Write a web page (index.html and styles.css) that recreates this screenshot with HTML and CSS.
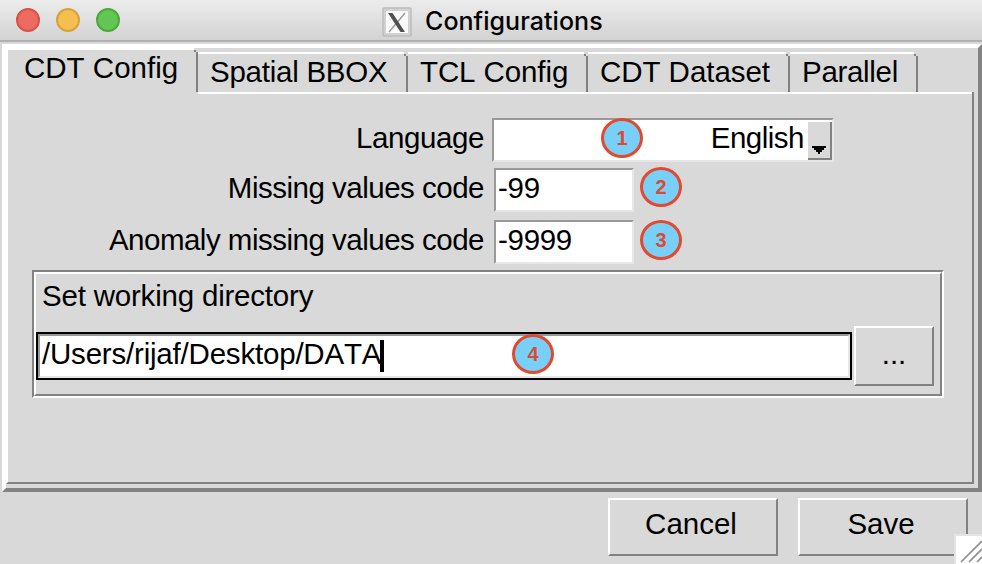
FILE: index.html
```html
<!DOCTYPE html>
<html lang="en">
<head>
<meta charset="utf-8">
<title>Configurations</title>
<link rel="stylesheet" href="styles.css">
</head>
<body>
<div class="window">
  <header class="titlebar">
    <div class="lights"><i class="light red"></i><i class="light yellow"></i><i class="light green"></i></div>
    <svg class="xicon" width="30" height="30" viewBox="0 0 30 30">
      <rect x="1" y="1" width="28" height="28" rx="1" fill="#d2d2d2" stroke="#bdbdbd" stroke-width="1.5"/>
      <rect x="4" y="4" width="22" height="22" fill="#fafafa"/>
      <path d="M23 6L7 25" stroke="#999" stroke-width="1.4"/>
      <path d="M6 6h4.5l12.500 19h-4.500z" fill="#505050"/>
    </svg>
    <h1 class="title">Configurations</h1>
  </header>
  <main class="notebook">
    <nav class="tabs">
      <div class="tab active"><span>CDT Config</span></div>
      <div class="tab bbox"><span>Spatial BBOX</span></div>
      <div class="tab tcl"><span>TCL Config</span></div>
      <div class="tab dataset"><span>CDT Dataset</span></div>
      <div class="tab parallel"><span>Parallel</span></div>
    </nav>
    <section class="page">
      <div class="row row-lang">
        <label>Language</label>
        <div class="field combo"><span class="value">English</span>
          <div class="drop"><svg width="14" height="8" viewBox="0 0 14 8" shape-rendering="crispEdges"><path d="M0 0h14v2h-2v2h-2v2h-2v2h-2v-2h-2v-2h-2v-2h-2z"/></svg></div>
          <b class="badge b1">1</b>
        </div>
      </div>
      <div class="row row-miss"><label>Missing values code</label><div class="field entry">-99</div><b class="badge">2</b></div>
      <div class="row row-anom"><label>Anomaly missing values code</label><div class="field entry">-9999</div><b class="badge b3">3</b></div>
      <div class="group">
        <div class="group-in">
          <div class="caption">Set working directory</div>
          <div class="dir-row">
            <div class="path"><div class="path-in"><span class="path-text">/Users/rijaf/Desktop/DATA</span><i class="caret"></i></div><b class="badge b4">4</b></div>
            <div class="button browse">...</div>
          </div>
        </div>
      </div>
    </section>
  </main>
  <footer class="actions">
    <div class="button cancel"><span>Cancel</span></div>
    <div class="button save"><span>Save</span></div>
  </footer>
  <svg class="grip" width="28" height="30" viewBox="0 0 28 30">
    <path d="M0 0h28v30H0z" fill="#e4e4e4"/><path d="M2 2h26v28H2z" fill="#fff"/>
    <path d="M7 28L28 7M15 28L28 15M23 28L28 23" stroke="#8d8d8d" stroke-width="1.7"/>
  </svg>
</div>
</body>
</html>
```
FILE: styles.css
```css
* { box-sizing: border-box; }
body { margin: 0; background: #d9d9d9; }
.window {
  position: relative;
  width: 982px;
  height: 564px;
  overflow: hidden;
  background: #d9d9d9;
  color: #000;
  font: 29.5px/34px "Liberation Sans", Arial, sans-serif;
  font-kerning: none;
  white-space: nowrap;
}
.titlebar {
  display: flex;
  height: 42px;
  border-bottom: 2px solid #b0b0b0;
  background: linear-gradient(#ececec, #d3d3d3);
}
.lights { display: flex; gap: 16px; width: 382px; padding: 8px 0 0 16px; }
.light { width: 24px; height: 24px; border-radius: 50%; border: 2px solid; }
.red { background: #ed6b60; border-color: #d65246; }
.yellow { background: #f5bf4f; border-color: #d9a03c; }
.green { background: #61c654; border-color: #4fa73c; }
.xicon { margin-top: 7px; }
.title {
  margin: 4px 0 0 13px;
  font: 500 25px/34px Inter, sans-serif;
  letter-spacing: 0.05px;
}
.notebook {
  height: 448px;
  margin: 2px 0 0 2px;
  border: 4px solid;
  border-color: #fff #828282 #828282 #fff;
  padding-right: 4px;
}
.tabs { display: flex; height: 44px; }
.tab {
  position: relative;
  height: 40px;
  margin-top: 4px;
  padding: 1px 0 0 12px;
  border-top: 2px solid #fff;
  border-right: 2px solid #828282;
}
.tab::after {
  content: "";
  position: absolute;
  top: -2px;
  right: -2px;
  width: 4px;
  height: 4px;
  background: linear-gradient(#828282, #828282) 0 2px / 2px 2px no-repeat #d9d9d9;
}
.tab.active {
  width: 192px;
  height: 44px;
  margin-top: 0;
  padding: 1px 0 0 16px;
  border-left: 2px solid #fff;
}
.bbox { width: 210px; letter-spacing: -0.25px; }
.tcl { width: 180px; letter-spacing: -0.1px; }
.dataset { width: 202px; letter-spacing: -0.05px; }
.parallel { width: 128px; letter-spacing: -0.3px; }
.page {
  height: 392px;
  border: 2px solid;
  border-color: #fff #828282 #828282 #fff;
}
.tabs + .page { border-top: 0; background: linear-gradient(#fff, #fff) 190px 0 / 774px 2px no-repeat; }
.row { display: flex; height: 44px; letter-spacing: -0.5px; }
.row label { width: 476px; text-align: right; padding-top: 3px; }
.row-lang { padding-top: 26px; height: 70px; }
.row-lang label { letter-spacing: -0.4px; }
.row-miss { margin-top: 6px; }
.row-anom { margin-top: 8px; }
.field {
  height: 44px;
  background: #fff;
  border: 2px solid;
  border-color: #999 #e6e6e6 #e6e6e6 #999;
}
.entry { width: 140px; margin-left: 10px; padding: 1px 0 0 2px; letter-spacing: -0.3px; }
.combo {
  position: relative;
  display: flex;
  justify-content: flex-end;
  width: 342px;
  margin-left: 8px;
  padding-top: 2px;
}
.value { margin: -1px 4px 0 0; }
.drop {
  width: 24px;
  height: 38px;
  background: #d9d9d9;
  border-right: 2px solid #828282;
  border-bottom: 2px solid #828282;
  padding: 24px 0 0 4px;
  line-height: 0;
}
.drop svg { display: block; }
.badge {
  width: 42px;
  height: 40px;
  margin: -1px 0 0 6px;
  border: 3px solid #e2492f;
  border-radius: 50%;
  background: #78d0f8;
  color: #dc4a33;
  font: bold 20px/34px "Liberation Sans", Arial, sans-serif;
  letter-spacing: 0;
  text-align: center;
}
.b1 { position: absolute; left: 107px; top: -2px; margin: 0; }
.b3 { margin-top: 0; }
.b4 { position: absolute; left: 474px; top: 0; margin: 0; }
.group {
  width: 912px;
  height: 128px;
  margin: 6px 0 0 24px;
  border: 2px solid;
  border-color: #828282 #fff #fff #828282;
}
.group-in {
  height: 124px;
  border: 2px solid;
  border-color: #fff #828282 #828282 #fff;
}
.caption { height: 52px; padding: 5px 0 0 6px; letter-spacing: -0.2px; }
.dir-row { display: flex; align-items: center; gap: 2px; height: 60px; }
.path { position: relative; width: 816px; height: 48px; border: 2px solid #000; }
.path-in {
  display: flex;
  height: 44px;
  background: #fff;
  border: 2px solid;
  border-color: #999 #e6e6e6 #e6e6e6 #999;
  padding: 1px 0 0 2px;
}
.path-text { width: 339px; letter-spacing: -0.2px; }
.caret { width: 4px; height: 32px; margin: 3px 0 0 -1px; background: #000; }
.button {
  border: 2px solid;
  border-color: #fff #828282 #828282 #fff;
  text-align: center;
}
.browse { width: 80px; height: 60px; padding-top: 9px; }
.actions { display: flex; gap: 20px; padding: 6px 0 0 608px; }
.actions .button { width: 170px; height: 58px; padding-top: 7px; }
.actions .cancel { padding-right: 4px; }
.actions .save { padding-right: 4px; }
.grip { position: absolute; right: 0; bottom: 0; width: 28px; height: 30px; }
```
